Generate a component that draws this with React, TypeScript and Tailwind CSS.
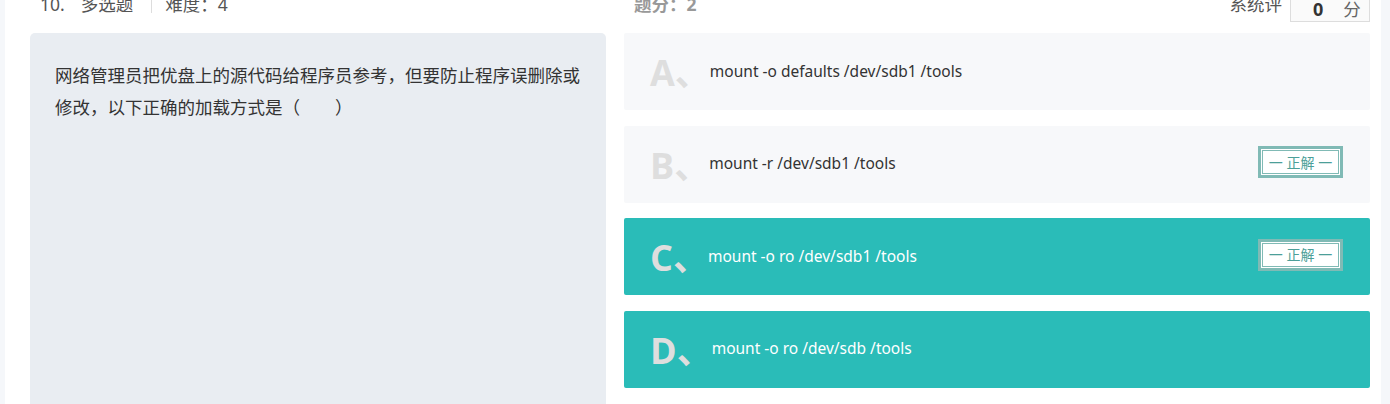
import React from 'react';

const options = [
  { key: 'A', text: 'mount -o defaults /dev/sdb1 /tools', selected: false, correct: false },
  { key: 'B', text: 'mount -r /dev/sdb1 /tools', selected: false, correct: true },
  { key: 'C', text: 'mount -o ro /dev/sdb1 /tools', selected: true, correct: true },
  { key: 'D', text: 'mount -o ro /dev/sdb /tools', selected: true, correct: false },
];

const cjk = { fontFamily: '"Noto Sans", "Noto Sans CJK SC", sans-serif' };

function Badge() {
  return (
    <div className="border-[3px] border-[#80bab5] bg-white p-[1px]">
      <div className="flex h-[24px] w-[77px] items-center justify-center border border-[#80bab5] text-[14px] text-[#4c9f99]">
        一 正解 一
      </div>
    </div>
  );
}

export default function App() {
  return (
    <div className="flex h-[404px] overflow-hidden bg-white text-[#333]" style={cjk}>
      <div className="w-[5px] shrink-0 bg-[#f5f7fa]" />
      <div className="flex-1 pl-[25px] pr-[11px]">
        {/* header */}
        <div className="-mt-[14px] flex h-[36px] items-center text-[17.5px] text-[#555]">
          <div className="flex w-[594px] items-center pl-[10px]">
            <span>10.</span>
            <span className="ml-[16px]">多选题</span>
            <span className="ml-[18px] mr-[13px] h-[26px] w-px translate-y-[-4px] bg-[#ddd]" />
            <span>难度：4</span>
          </div>
          <div className="ml-[10px] font-bold text-[#999]">题分：2</div>
          <div className="ml-auto flex items-center">
            <span className="mr-[8px] text-[#555]">系统评</span>
            <div className="flex h-[36px] w-[80px] items-center border border-[#ddd] bg-[#fafafa] pl-[22px] pt-[10px]">
              <span className="text-[18px] font-bold text-[#333]">0</span>
              <span className="ml-[20px] text-[#666]">分</span>
            </div>
          </div>
        </div>

        <div className="mt-[11px] flex gap-[18px]">
          <div className="h-[400px] w-[576px] shrink-0 rounded-[5px] bg-[#e9edf2] pl-[25px] pr-[20px] pt-[26px] text-[17.5px] leading-[32px] text-[#333]">
            网络管理员把优盘上的源代码给程序员参考，但要防止程序误删除或修改，以下正确的加载方式是（　　）
          </div>

          <div className="flex flex-1 flex-col gap-[15.5px]">
            {options.map((o) => (
              <div
                key={o.key}
                className={
                  o.selected
                    ? 'flex h-[77px] items-center rounded-[2px] bg-[#2abcb8] pl-[26px] pr-[27px] text-white'
                    : 'flex h-[77px] items-center rounded-[2px] bg-[#f7f8fa] pl-[26px] pr-[27px] text-[#333]'
                }
              >
                <span className="whitespace-nowrap text-[36px] font-bold leading-none text-[#dedede]" style={{ fontFamily: '"Open Sans", sans-serif' }}>
                  {o.key}
                  <span style={{ fontFamily: '"Noto Sans CJK SC", sans-serif' }}>、</span>
                </span>
                <span className="-ml-[1px] text-[15.5px]">{o.text}</span>
                {o.correct && (
                  <div className="ml-auto -translate-y-[2px]">
                    <Badge />
                  </div>
                )}
              </div>
            ))}
          </div>
        </div>
      </div>
      <div className="w-[9px] shrink-0 bg-[#f5f7fa]" />
    </div>
  );
}
